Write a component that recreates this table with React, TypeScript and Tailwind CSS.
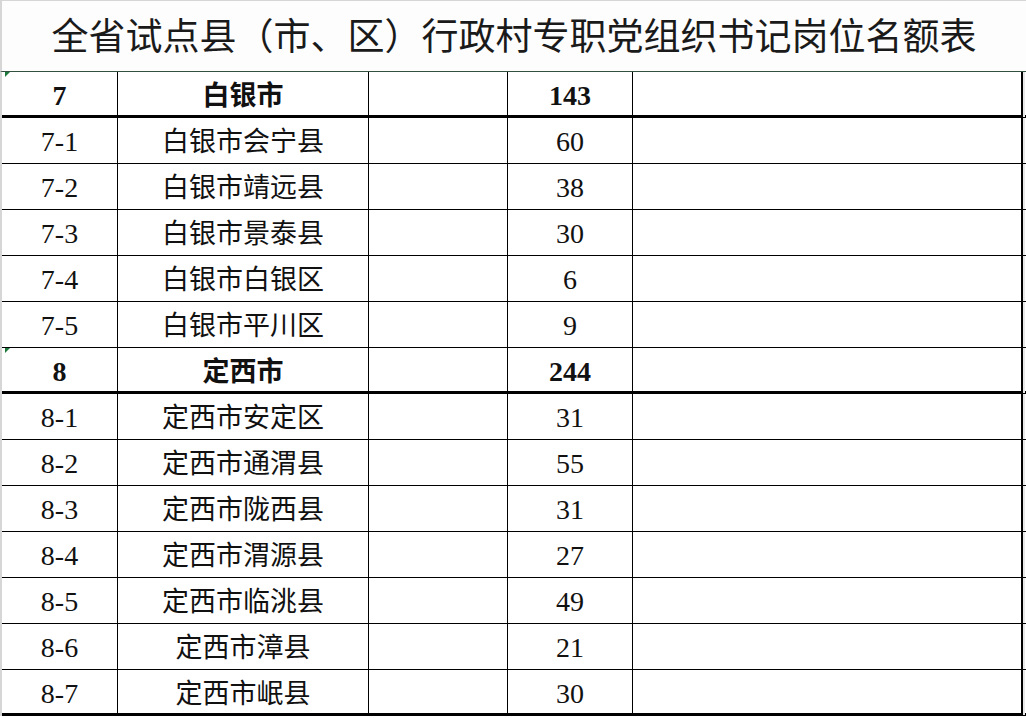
const rows: { code: string; name: string; count: string; city?: boolean }[] = [
  { code: "7", name: "白银市", count: "143", city: true },
  { code: "7-1", name: "白银市会宁县", count: "60" },
  { code: "7-2", name: "白银市靖远县", count: "38" },
  { code: "7-3", name: "白银市景泰县", count: "30" },
  { code: "7-4", name: "白银市白银区", count: "6" },
  { code: "7-5", name: "白银市平川区", count: "9" },
  { code: "8", name: "定西市", count: "244", city: true },
  { code: "8-1", name: "定西市安定区", count: "31" },
  { code: "8-2", name: "定西市通渭县", count: "55" },
  { code: "8-3", name: "定西市陇西县", count: "31" },
  { code: "8-4", name: "定西市渭源县", count: "27" },
  { code: "8-5", name: "定西市临洮县", count: "49" },
  { code: "8-6", name: "定西市漳县", count: "21" },
  { code: "8-7", name: "定西市岷县", count: "30" },
];

// rows followed by a heavy rule
const heavy = new Set(["7", "8", "8-7"]);

function Flag() {
  return (
    <span className="absolute left-[3px] top-0 h-0 w-0 border-t-[5px] border-r-[5px] border-t-[#1e7a3c] border-r-transparent" />
  );
}

export default function App() {
  return (
    <div
      className="h-[718px] w-[1026px] overflow-hidden bg-white text-[#111]"
      style={{ fontFamily: '"Liberation Serif", "Noto Sans CJK SC", serif' }}
    >
      {/* Title */}
      <div className="flex h-[72px] items-center justify-center border-t border-l-2 border-b border-t-[#d6d6d6] border-l-[#d6d6d6] border-b-[#34503e] bg-[#fdfdfd] pt-[2px] text-[37px] leading-none text-[#1a1a1a]">
        全省试点县（市、区）行政村专职党组织书记岗位名额表
      </div>

      {/* Table */}
      <div className="flex flex-col border-l-2 border-l-[#d6d6d6]">
        {rows.map((r, i) => {
          const bottom = heavy.has(r.code) ? "border-b-[3px]" : "border-b";
          return (
            <div
              key={r.code}
              className={`relative grid h-[46px] grid-cols-[116px_251px_139px_125px_390px_2px] border-black ${bottom} ${r.city ? "font-bold" : ""}`}
            >
              {(r.city || i === 0) && <Flag />}
              <div className="flex items-center justify-center border-r border-black pt-[3px] text-[28px]">{r.code}</div>
              <div className="flex items-center justify-center border-r border-black pt-[3px] text-[27px]">{r.name}</div>
              <div className="border-r border-black" />
              <div className="flex items-center justify-center border-r border-black pt-[3px] text-[28px]">{r.count}</div>
              <div className="border-r-2 border-black" />
              <div className="bg-[#e8e8e8]" />
            </div>
          );
        })}
      </div>
    </div>
  );
}
